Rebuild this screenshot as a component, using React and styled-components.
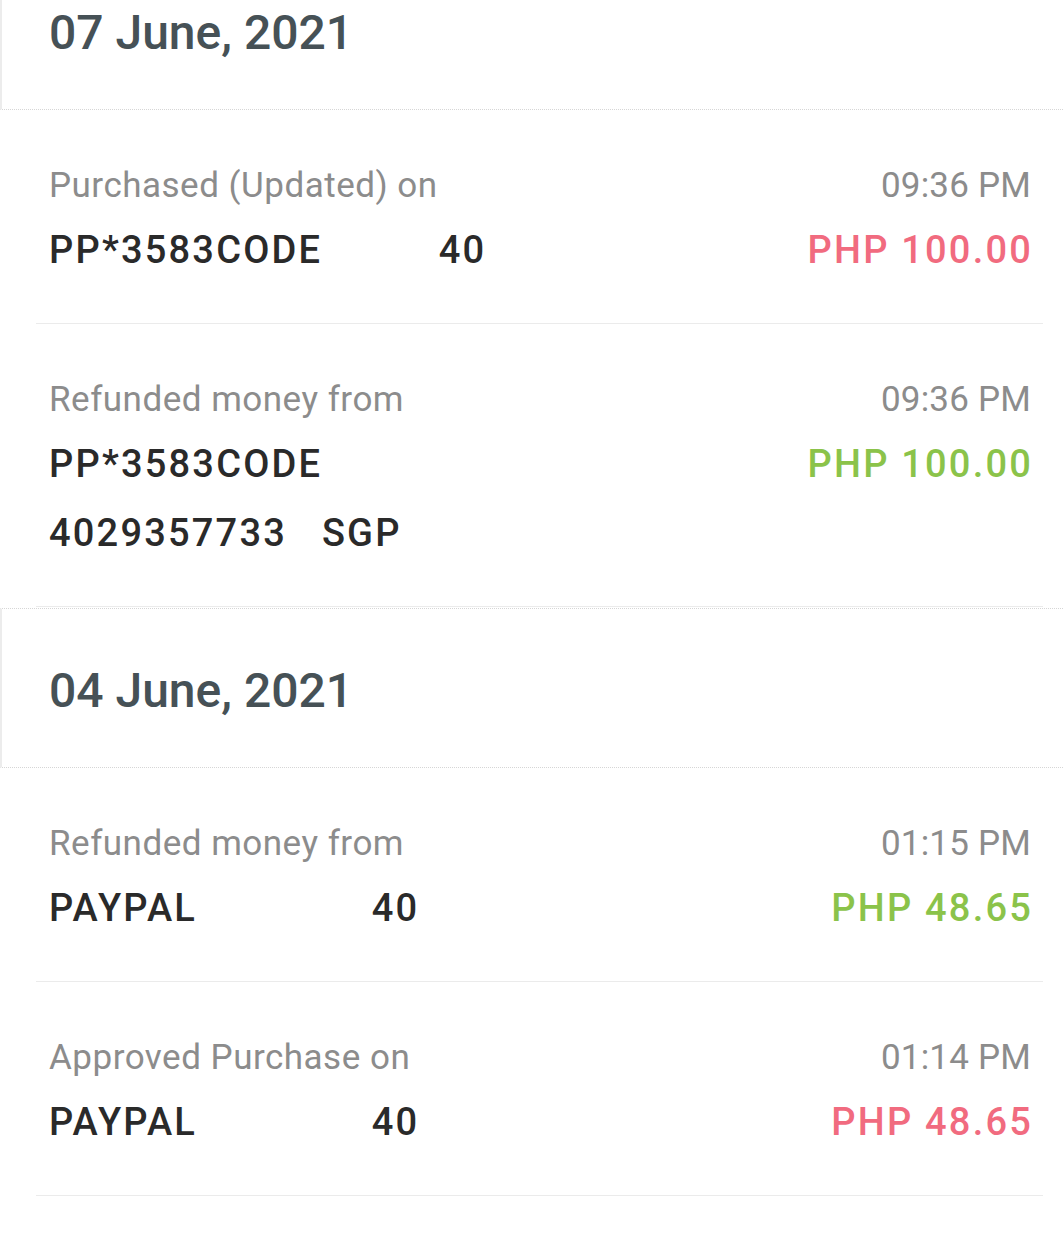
import styled, { createGlobalStyle } from "styled-components";

const GlobalStyle = createGlobalStyle`
    * {
        box-sizing: border-box;
    }
    body {
        margin: 0;
        background: #ffffff;
        font-family: Roboto, "Noto Sans", sans-serif;
        overflow: hidden;
    }
`;

const days = [
    {
        date: "07 June, 2021",
        items: [
            { label: "Purchased (Updated) on", time: "09:36 PM", lines: ["PP*3583CODE          40"], amount: "PHP 100.00", refund: false },
            { label: "Refunded money from", time: "09:36 PM", lines: ["PP*3583CODE", "4029357733   SGP"], amount: "PHP 100.00", refund: true },
        ],
    },
    {
        date: "04 June, 2021",
        items: [
            { label: "Refunded money from", time: "01:15 PM", lines: ["PAYPAL               40"], amount: "PHP 48.65", refund: true },
            { label: "Approved Purchase on", time: "01:14 PM", lines: ["PAYPAL               40"], amount: "PHP 48.65", refund: false },
        ],
    },
];

export default function App() {
    return (
        <>
            <GlobalStyle />
            <List>
                {days.map((day) => (
                    <section key={day.date}>
                        <DateHeader>
                            <h2>{day.date}</h2>
                        </DateHeader>
                        {day.items.map((item, i) => (
                            <Transaction key={i}>
                                <Line>
                                    <Label>{item.label}</Label>
                                    <Time>{item.time}</Time>
                                </Line>
                                {item.lines.map((text, j) => (
                                    <Line key={j}>
                                        <Merchant>{text}</Merchant>
                                        {j === 0 && <Amount refund={item.refund}>{item.amount}</Amount>}
                                    </Line>
                                ))}
                            </Transaction>
                        ))}
                    </section>
                ))}
            </List>
        </>
    );
}

// the list is scrolled a little, the first header is cut at the top
const List = styled.div`
    margin-top: -51px;
    width: 100%;
`;

const DateHeader = styled.div`
    height: 160px;
    margin-top: 1px;
    padding: 4px 0 0 47px;
    display: flex;
    align-items: center;
    background: #ffffff;
    border-top: 1px dotted #d6d6d6;
    border-bottom: 1px dotted #d6d6d6;
    border-left: 2px solid #ececec;
    h2 {
        margin: 0;
        font-size: 48px;
        font-weight: 500;
        color: #465156;
    }
`;

const Transaction = styled.div`
    margin: 0 20px 0 36px;
    padding: 46px 12px 38px 13px;
    border-bottom: 1px solid #ebebeb;
`;

const Line = styled.div`
    display: flex;
    justify-content: space-between;
    align-items: baseline;
    height: 69px;
    line-height: 69px;
    &:first-child {
        height: 60px;
        line-height: 60px;
    }
`;

const Label = styled.span`
    font-size: 35px;
    font-weight: 400;
    letter-spacing: 0.5px;
    color: #8c8c8c;
`;

const Time = styled.span`
    font-size: 35px;
    font-weight: 400;
    letter-spacing: 0.2px;
    color: #8c8c8c;
`;

const Merchant = styled.span`
    font-size: 38px;
    font-weight: 500;
    letter-spacing: 2.2px;
    color: #2a2a2a;
    white-space: pre;
`;

const Amount = styled.span`
    font-size: 38px;
    font-weight: 500;
    letter-spacing: 2.2px;
    margin-right: -2px;
    color: ${(props) => (props.refund ? "#8bc34a" : "#f16b7f")};
`;
